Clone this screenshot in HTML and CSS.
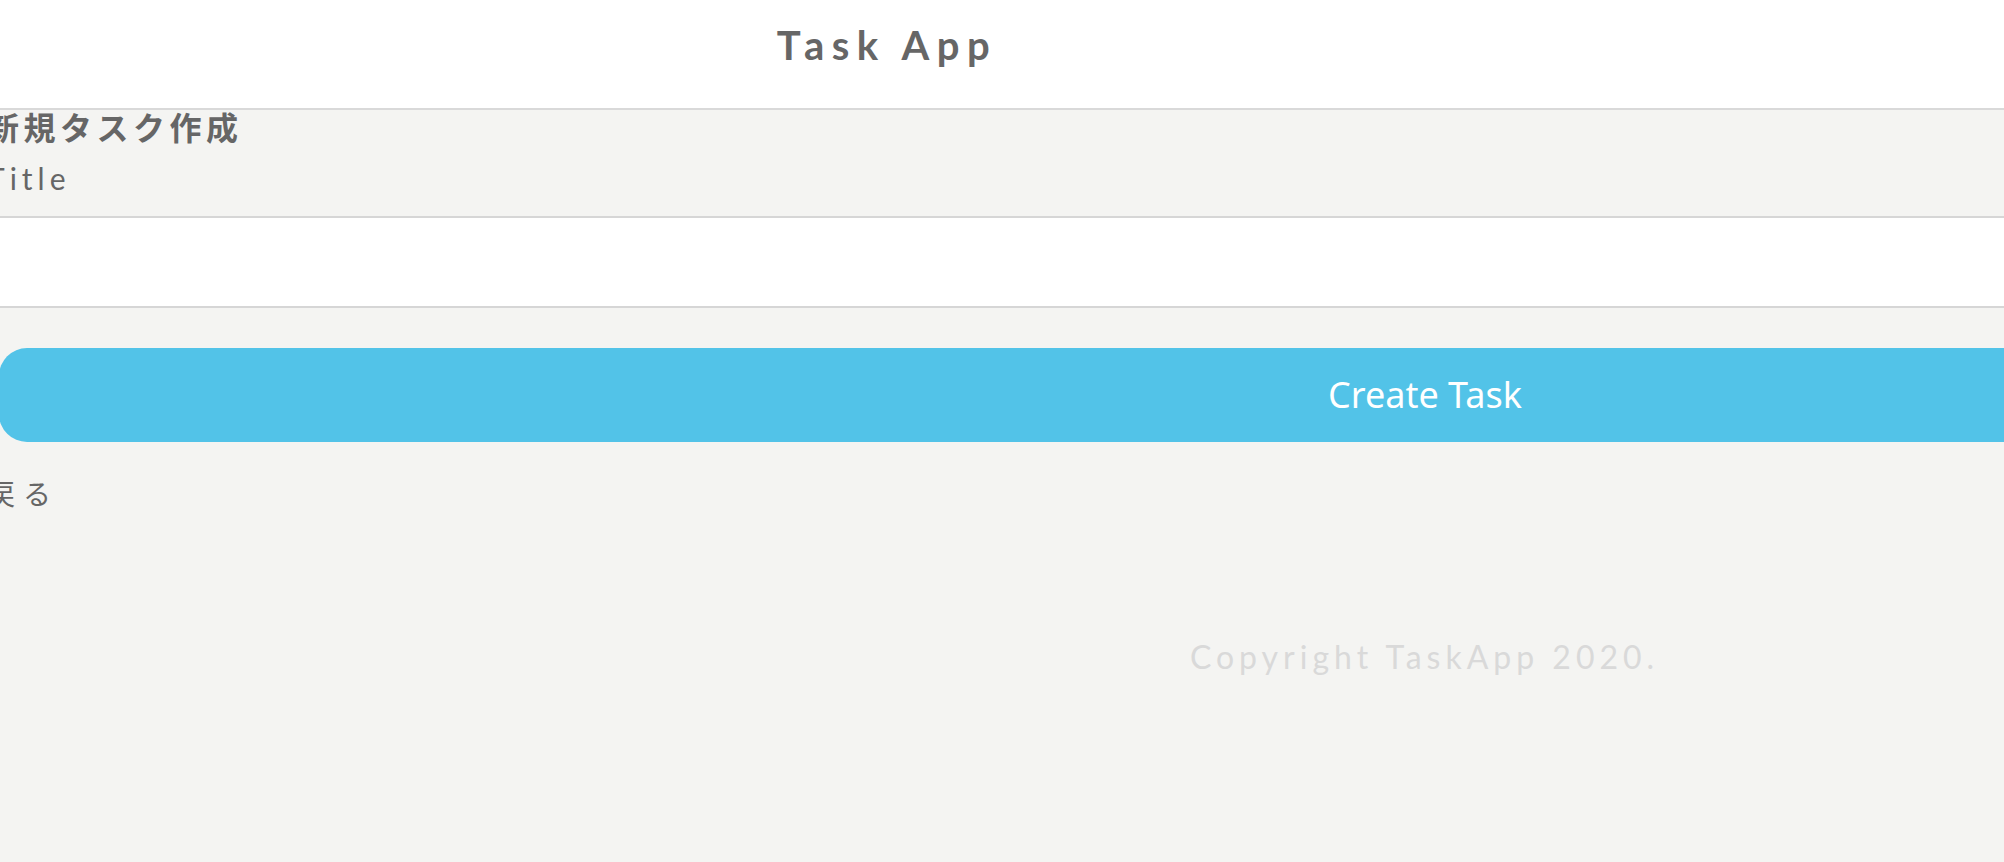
FILE: index.html
```html
<!DOCTYPE html>
<html lang="ja">
<head>
<meta charset="utf-8">
<title>Task App</title>
<link rel="stylesheet" href="styles.css">
</head>
<body>
<header class="site-header">
  <h1 class="site-title">Task App</h1>
</header>
<main class="page">
  <form class="task-form">
    <h2 class="form-heading">新規タスク作成</h2>
    <label class="field-label" for="title">Title</label>
    <input class="field-input" id="title" type="text">
    <button class="submit-btn" type="button">Create Task</button>
  </form>
  <a class="back-link" href="#">戻る</a>
  <footer class="site-footer">Copyright TaskApp 2020.</footer>
</main>
</body>
</html>
```
FILE: styles.css
```css
html, body {
  margin: 0;
  padding: 0;
}

body {
  background: #f4f4f2;
  font-family: Lato, "Noto Sans CJK JP", sans-serif;
  color: #666666;
  overflow: hidden;
  height: 862px;
}

.site-header {
  background: #ffffff;
  border-bottom: 2px solid #d9d9d9;
  height: 110px;
  box-sizing: border-box;
  padding-top: 25px;
}

.site-title {
  margin: 0;
  width: 1774px;
  text-align: center;
  font-family: Lato, sans-serif;
  font-weight: 700;
  font-size: 40px;
  line-height: 40px;
  letter-spacing: 7.5px;
  color: #666666;
}

.page {
  margin-left: -13px;
  width: 2875px;
}

.task-form {
  display: flex;
  flex-direction: column;
  align-items: flex-start;
  margin: 0;
}

.form-heading {
  margin: 0;
  font-family: "Noto Sans CJK JP", sans-serif;
  font-weight: 700;
  font-size: 32px;
  line-height: 32px;
  letter-spacing: 4.5px;
  color: #666666;
}

.field-label {
  display: block;
  margin-top: 16px;
  font-family: Lato, sans-serif;
  font-weight: 400;
  font-size: 30px;
  line-height: 40px;
  letter-spacing: 5px;
  color: #666666;
}

.field-input {
  display: block;
  box-sizing: border-box;
  width: 100%;
  height: 92px;
  margin: 18px 0 0 0;
  border: none;
  border-top: 2px solid #d6d6d6;
  border-bottom: 2px solid #d6d6d6;
  background: #ffffff;
  outline: none;
  padding: 0 20px;
  font-size: 28px;
}

.submit-btn {
  display: flex;
  align-items: center;
  justify-content: center;
  box-sizing: border-box;
  width: 2852px;
  height: 94px;
  margin: 40px 0 0 12px;
  border: none;
  border-radius: 28px;
  background: #52c3e8;
  color: #ffffff;
  font-family: "Noto Sans", sans-serif;
  font-size: 36px;
  line-height: 1;
  padding: 0;
}

.back-link {
  display: block;
  margin-top: 31px;
  font-family: "Noto Sans CJK JP", sans-serif;
  font-weight: 400;
  font-size: 28px;
  line-height: 40px;
  letter-spacing: 8px;
  color: #666666;
  text-decoration: none;
}

.site-footer {
  margin-top: 124px;
  text-align: center;
  font-family: Lato, sans-serif;
  font-weight: 400;
  font-size: 32px;
  line-height: 40px;
  letter-spacing: 5px;
  color: #d9d9d9;
}
```
